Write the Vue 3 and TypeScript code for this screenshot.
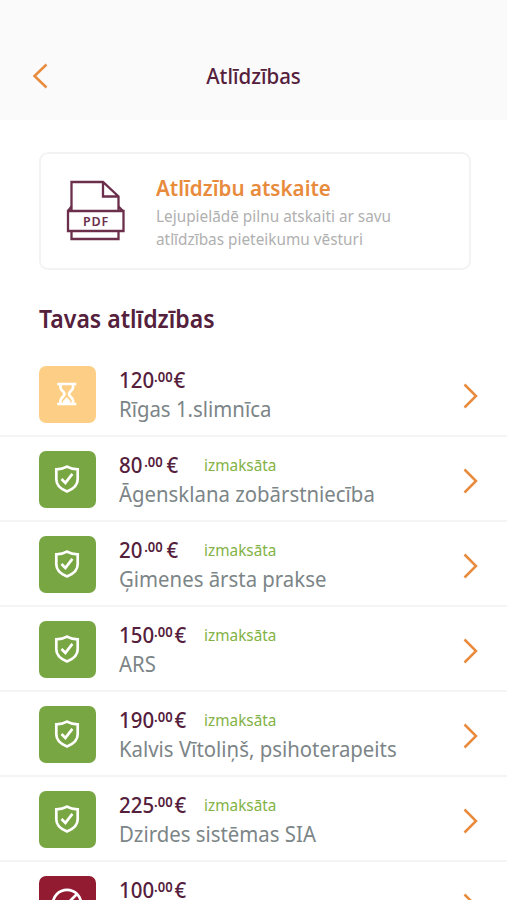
<script setup lang="ts">
type ClaimStatus = 'pending' | 'paid' | 'rejected'

interface Claim {
  id: number
  euros: string
  cents: string
  provider: string
  status: ClaimStatus
}

const claims: Claim[] = [
  { id: 1, euros: '120', cents: '.00', provider: 'Rīgas 1.slimnīca', status: 'pending' },
  { id: 2, euros: '80', cents: '.00', provider: 'Āgensklana zobārstniecība', status: 'paid' },
  { id: 3, euros: '20', cents: '.00', provider: 'Ģimenes ārsta prakse', status: 'paid' },
  { id: 4, euros: '150', cents: '.00', provider: 'ARS', status: 'paid' },
  { id: 5, euros: '190', cents: '.00', provider: 'Kalvis Vītoliņš, psihoterapeits', status: 'paid' },
  { id: 6, euros: '225', cents: '.00', provider: 'Dzirdes sistēmas SIA', status: 'paid' },
  { id: 7, euros: '100', cents: '.00', provider: '', status: 'rejected' },
]
</script>

<template>
  <div class="screen">
    <header class="topbar">
      <button class="back" type="button">
        <svg width="16" height="26" viewBox="0 0 16 26">
          <path d="M14.500 1.500 2.500 13 14.500 24.500" />
        </svg>
      </button>
      <h1 class="title">Atlīdzības</h1>
    </header>

    <main>
      <section class="report">
        <svg class="pdf" width="60" height="62" viewBox="0 0 60 62">
          <path d="M5.500 30V2h31.500L52.500 16.500V30M37 2v14.500h15.500" />
          <path d="M5.500 26.500 2 31M52.500 26.500 57 31" />
          <path d="M2 31h55.500v20H2zM5.500 51v8h47v-8" />
          <text x="30" y="45.500" text-anchor="middle">PDF</text>
        </svg>
        <div class="report-text">
          <h2>Atlīdzību atskaite</h2>
          <p>Lejupielādē pilnu atskaiti ar savu<br />atlīdzības pieteikumu vēsturi</p>
        </div>
      </section>

      <h2 class="section-title">Tavas atlīdzības</h2>

      <ul class="claims">
        <li v-for="claim in claims" :key="claim.id" class="claim">
          <div class="tile" :class="claim.status">
            <svg v-if="claim.status === 'pending'" width="22" height="24" viewBox="0 0 22 24">
              <path class="stroke" d="M1.300 2h19M1.300 22h19M4.500 2v3.500c0 3 4 4 4 6.500s-4 3.500-4 6.500V22M17 2v3.500c0 3-4 4-4 6.500s4 3.500 4 6.500V22" />
              <path class="fill" d="M6.700 21c0-3 3-4 4-6 1 2 4 3 4 6z" />
            </svg>
            <svg v-else-if="claim.status === 'paid'" width="26" height="28" viewBox="0 0 26 28">
              <path class="stroke" d="M13 1.600C9.800 3.500 6.200 4.200 2.300 4.300v9.900c0 5.800 4.200 9.700 10.700 12.200 6.500-2.500 10.700-6.400 10.700-12.200V4.300C19.800 4.200 16.200 3.500 13 1.600z" />
              <path class="stroke" d="m7.500 14 3.900 3.900 7-9" />
            </svg>
            <svg v-else width="32" height="32" viewBox="0 0 32 32">
              <circle class="stroke" cx="16" cy="16" r="14.200" />
              <path class="stroke" d="M26 6 6 26" />
            </svg>
          </div>
          <div class="details">
            <div class="amount-row">
              <div class="amount-cell">
                <span class="amount" :class="{ short: claim.euros.length < 3, tight: claim.status === 'pending' }">
                  <span>{{ claim.euros }}</span><span class="cents">{{ claim.cents }}</span><span class="euro">€</span>
                </span>
              </div>
              <span v-if="claim.status === 'paid'" class="paid-label">izmaksāta</span>
            </div>
            <div class="provider">{{ claim.provider }}</div>
          </div>
          <svg class="chevron" width="16" height="26" viewBox="0 0 16 26">
            <path d="M1.500 1.500 13 13 1.500 24.500" />
          </svg>
        </li>
      </ul>
    </main>
  </div>
</template>

<style>
body {
  margin: 0;
  background: #fff;
}
</style>

<style scoped>
.screen {
  height: 900px;
  overflow: hidden;
  background: #fff;
  font-family: 'Noto Sans', sans-serif;
  color: #54203c;
}

h1,
h2,
p,
ul {
  margin: 0;
  padding: 0;
}

/* Slightly condensed lettering */
.title,
.report h2,
.report p,
.section-title,
.amount,
.paid-label,
.provider {
  transform: scaleX(0.93);
  transform-origin: left center;
}

.topbar {
  box-sizing: border-box;
  height: 120px;
  padding: 60px 32px 28px;
  display: grid;
  grid-template-columns: 60px 1fr 60px;
  align-items: center;
  background: #fafafa;
}

.back {
  display: flex;
  padding: 0;
  border: 0;
  background: none;
}

.back path,
.chevron path {
  fill: none;
  stroke: #e88b3d;
  stroke-width: 2.500;
}

.title {
  transform-origin: center;
  text-align: center;
  font-size: 22px;
  font-weight: 500;
  line-height: 30px;
  padding-bottom: 2px;
}

.report {
  box-sizing: border-box;
  height: 118px;
  margin: 32px 36px 0 39px;
  padding: 20px 24px 0 25px;
  display: flex;
  gap: 30px;
  border: 2px solid #f3f3f3;
  border-radius: 9px;
}

.pdf {
  flex: none;
  margin-top: 6px;
}

.pdf path {
  fill: none;
  stroke: #6b2f4b;
  stroke-width: 2.300;
}

.pdf text {
  fill: #6b2f4b;
  font-size: 12.500px;
  font-weight: 600;
  letter-spacing: 0.8px;
}

.report h2 {
  color: #e88b3d;
  font-size: 22.150px;
  font-weight: 600;
  line-height: 26px;
  white-space: nowrap;
}

.report p {
  margin-top: 4px;
  color: #b0b0b0;
  font-size: 16.500px;
  line-height: 23px;
  white-space: nowrap;
}

.section-title {
  margin: 32px 0 0 39px;
  font-size: 24.800px;
  font-weight: 600;
  line-height: 33px;
}

.claims {
  margin-top: 17px;
  list-style: none;
}

.claim {
  box-sizing: border-box;
  height: 85px;
  padding: 14px 28px 0 38.500px;
  display: flex;
  align-items: flex-start;
  border-bottom: 2px solid #f4f4f4;
}

.tile {
  flex: none;
  width: 57px;
  height: 56.500px;
  display: flex;
  align-items: center;
  justify-content: center;
  border-radius: 7px;
}

.pending {
  background: #fdcf86;
}

.paid {
  background: #78a642;
}

.rejected {
  background: #921b31;
}

.stroke {
  fill: none;
  stroke: #fff;
  stroke-width: 2.700;
}

.fill {
  fill: #fff;
}

.details {
  flex: 1;
  margin: -1px 0 0 23px;
  white-space: nowrap;
}

.amount-row {
  display: flex;
  height: 28px;
  line-height: 28px;
}

.amount-cell {
  flex: none;
  width: 85.500px;
}

.amount {
  display: flex;
  font-size: 22px;
  font-weight: 500;
}

.cents {
  margin-top: -2px;
  font-size: 14px;
  font-weight: 600;
}

.euro {
  margin-left: 2px;
}

.short .cents {
  margin-left: 2px;
}

.short .euro {
  margin-left: 4px;
}

.tight .euro {
  margin-left: 1px;
}

.paid-label {
  padding-top: 1px;
  color: #83b245;
  font-size: 16.500px;
}

.provider {
  margin-top: 2px;
  color: #7c8587;
  font-size: 21.900px;
  line-height: 28px;
}

.chevron {
  flex: none;
  margin-top: 17px;
}
</style>
